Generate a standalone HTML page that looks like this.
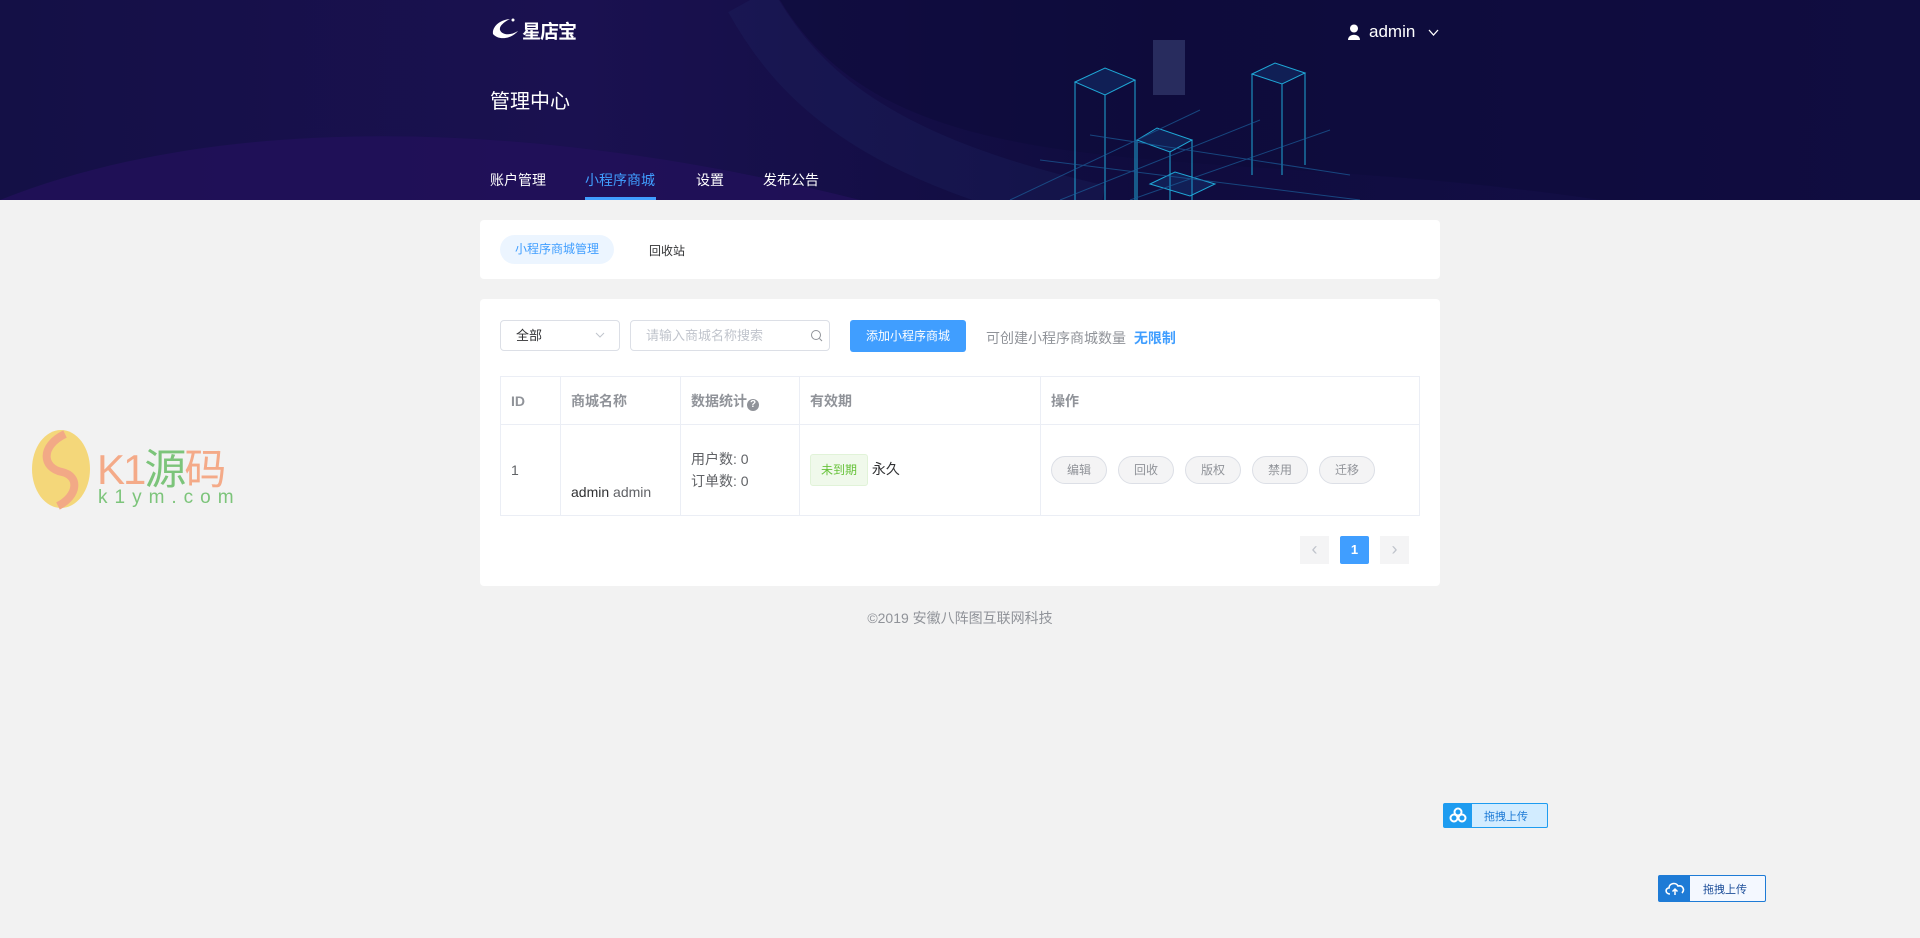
<!DOCTYPE html>
<html><head><meta charset="utf-8"><style>
*{margin:0;padding:0;box-sizing:border-box}
body{width:1920px;height:938px;background:#f2f2f2;font-family:"Liberation Sans","Noto Sans CJK SC",sans-serif;position:relative;overflow:hidden;color:#606266}
.hd{position:absolute;left:0;top:0;width:1920px;height:200px;background:linear-gradient(90deg,#141046 0%,#1a1150 30%,#0f0c3e 60%,#150f4a 100%);overflow:hidden}
.abs{position:absolute}
.card{position:absolute;background:#fff;border-radius:4px;left:480px;width:960px}
table{border-collapse:collapse;position:absolute;left:500px;top:376px;width:920px;font-size:14px}
td,th{border:1px solid #ebeef5;text-align:left;padding:0 10px;font-weight:bold;color:#909399}
td{font-weight:normal;color:#606266}
.ob{display:inline-block;width:56px;height:28px;border:1px solid #dcdfe6;border-radius:14px;background:#f4f4f5;color:#909399;font-size:12px;line-height:26px;text-align:center;margin-right:11px}
</style></head><body>
<div class="hd">
<svg class="abs" style="left:0;top:0" width="1920" height="200">
<path d="M0 200 C200 120 500 110 860 200 Z" fill="#22105a" opacity=".8"/>
<path d="M780 0 C900 200 1200 140 1600 200 L1920 200 L1920 0 Z" fill="#0e0b3a" opacity=".6"/>
<path d="M750 0 C800 90 880 160 1100 210" stroke="#1e2a66" stroke-width="50" fill="none" opacity=".25"/>
<g stroke="#1fa7d6" stroke-width="1" fill="rgba(30,120,200,.18)">
<path d="M1075 82 L1105 68 L1135 80 L1105 95 Z M1075 82 L1075 200 M1105 95 L1105 200 M1135 80 L1135 200"/>
<path d="M1252 74 L1275 63 L1305 73 L1282 84 Z M1252 74 L1252 175 M1282 84 L1282 175 M1305 73 L1305 165"/>
<path d="M1137 140 L1157 128 L1192 140 L1170 152 Z M1137 140 L1137 200 M1170 152 L1170 200 M1192 140 L1192 200"/>
<path d="M1150 184 L1175 172 L1215 184 L1190 196 Z"/>
</g>
<path d="M1153 40 L1185 40 L1185 95 L1153 95 Z" fill="#3a4377" opacity=".6"/>
<g stroke="#1b5e9a" stroke-width="1" opacity=".7" fill="none">
<path d="M1010 200 L1200 110 M1060 200 L1260 120 M1130 200 L1330 130 M1040 160 L1360 200 M1090 135 L1350 175"/>
</g>
</svg>
<svg class="abs" style="left:490px;top:16px" width="30" height="26"><path d="M20 3 C8 4 2 12 3 18 C8 24 20 24 28 15 C20 20 12 19 10 14 C9 10 14 6 20 3Z" fill="#fff"/><circle cx="23" cy="4" r="1.5" fill="#fff"/></svg>
<div class="abs" style="left:522px;top:17px;color:#fff;font-size:19px;font-weight:bold;letter-spacing:-1px">星店宝</div>
<div class="abs" style="left:490px;top:85px;color:#fff;font-size:20px">管理中心</div>
<div class="abs" style="left:490px;top:170px;color:#fff;font-size:14px">账户管理</div>
<div class="abs" style="left:585px;top:170px;color:#409eff;font-size:14px">小程序商城</div>
<div class="abs" style="left:585px;top:197px;width:71px;height:3px;background:#409eff"></div>
<div class="abs" style="left:696px;top:170px;color:#fff;font-size:14px">设置</div>
<div class="abs" style="left:763px;top:170px;color:#fff;font-size:14px">发布公告</div>
<svg class="abs" style="left:1348px;top:24px" width="12" height="16"><circle cx="6" cy="4.5" r="4" fill="#fff"/><path d="M0 16 C0 9 12 9 12 16Z" fill="#fff"/></svg>
<div class="abs" style="left:1369px;top:22px;color:#fff;font-size:17px">admin</div>
<svg class="abs" style="left:1428px;top:29px" width="11" height="8"><path d="M1 1 L5.5 6 L10 1" stroke="#fff" fill="none" stroke-width="1.3"/></svg>
</div>

<div class="card" style="top:220px;height:59px"></div>
<div class="abs" style="left:500px;top:235px;width:114px;height:29px;border-radius:15px;background:#ecf5ff;color:#409eff;font-size:12px;line-height:29px;text-align:center">小程序商城管理</div>
<div class="abs" style="left:649px;top:242px;font-size:12px;color:#303133">回收站</div>

<div class="card" style="top:299px;height:287px"></div>
<div class="abs" style="left:500px;top:320px;width:120px;height:31px;border:1px solid #dcdfe6;border-radius:4px;font-size:13px;color:#303133;padding:0 15px;line-height:29px">全部</div>
<svg class="abs" style="left:595px;top:332px" width="10" height="7"><path d="M1 1 L5 5 L9 1" stroke="#c0c4cc" fill="none"/></svg>
<div class="abs" style="left:630px;top:320px;width:200px;height:31px;border:1px solid #dcdfe6;border-radius:4px;font-size:13px;color:#c0c4cc;padding:0 15px;line-height:29px">请输入商城名称搜索</div>
<svg class="abs" style="left:810px;top:329px" width="13" height="14"><circle cx="6" cy="6" r="4.5" stroke="#909399" fill="none"/><path d="M9.5 9.5 L12 12" stroke="#909399"/></svg>
<div class="abs" style="left:850px;top:320px;width:116px;height:32px;background:#409eff;border-radius:3px;color:#fff;font-size:12px;line-height:32px;text-align:center">添加小程序商城</div>
<div class="abs" style="left:986px;top:328px;font-size:14px;color:#909399">可创建小程序商城数量 <span style="color:#409eff;font-weight:bold;margin-left:4px">无限制</span></div>

<table>
<tr style="height:48px"><th style="width:60px">ID</th><th style="width:120px">商城名称</th><th style="width:119px">数据统计<span style="display:inline-block;width:12px;height:12px;border-radius:50%;background:#909399;color:#fff;font-size:10px;line-height:12px;text-align:center;vertical-align:-1px">?</span></th><th style="width:241px">有效期</th><th>操作</th></tr>
<tr style="height:91px"><td>1</td><td style="vertical-align:bottom;padding-bottom:15px;color:#303133">admin <span style="color:#606266">admin</span></td><td style="line-height:22px">用户数: 0<br>订单数: 0</td><td><span style="display:inline-block;height:32px;padding:0 10px;border:1px solid #e1f3d8;background:#f0f9eb;color:#67c23a;font-size:12px;line-height:30px;border-radius:3px">未到期</span> <span style="color:#303133">永久</span></td><td><span class="ob">编辑</span><span class="ob">回收</span><span class="ob">版权</span><span class="ob">禁用</span><span class="ob">迁移</span></td></tr>
</table>

<div class="abs" style="left:1300px;top:536px;width:29px;height:28px;background:#f4f4f5;color:#c0c4cc;text-align:center;line-height:26px;font-size:18px">‹</div>
<div class="abs" style="left:1340px;top:536px;width:29px;height:28px;background:#409eff;color:#fff;text-align:center;line-height:28px;font-size:13px;font-weight:bold;border-radius:2px">1</div>
<div class="abs" style="left:1380px;top:536px;width:29px;height:28px;background:#f4f4f5;color:#c0c4cc;text-align:center;line-height:26px;font-size:18px">›</div>

<div class="abs" style="left:0;width:1920px;top:608px;text-align:center;font-size:14px;color:#909399">©2019 安徽八阵图互联网科技</div>

<svg class="abs" style="left:30px;top:428px" width="62" height="82"><ellipse cx="31" cy="41" rx="29" ry="39" fill="#f4d77a"/><path d="M35 6 C10 18 12 40 32 44 C50 48 48 68 28 78" stroke="#f2a986" stroke-width="8" fill="none"/></svg>
<div class="abs" style="left:97px;top:436px;font-size:42px;color:#f4aa88;letter-spacing:-2px">K1<span style="color:#7cc47a">源</span>码</div>
<div class="abs" style="left:98px;top:487px;font-size:19px;color:#7cc47a;letter-spacing:7px">k1ym.com</div>

<div class="abs" style="left:1443px;top:803px;width:105px;height:25px;border:1px solid #1e9cf0;border-radius:2px;background:#d2ecff"><div style="width:28px;height:23px;background:#1e9cf0;position:relative"><svg class="abs" style="left:5px;top:3px" width="18" height="16"><circle cx="9" cy="5" r="3.5" stroke="#fff" stroke-width="2" fill="none"/><circle cx="5" cy="11" r="3.5" stroke="#fff" stroke-width="2" fill="none"/><circle cx="13" cy="11" r="3.5" stroke="#fff" stroke-width="2" fill="none"/></svg></div><span class="abs" style="left:40px;top:4px;font-size:11px;color:#1e7bd6">拖拽上传</span></div>
<div class="abs" style="left:1658px;top:875px;width:108px;height:27px;border:1px solid #1e7bd6;border-radius:2px;background:#f4f8ff"><div style="width:31px;height:25px;background:#1e7bd6;position:relative"><svg class="abs" style="left:5px;top:5px" width="22" height="15"><path d="M6 13 C1 13 1 7 5 7 C5 2 12 1 14 5 C19 4 21 9 18 12" stroke="#fff" stroke-width="1.6" fill="none"/><path d="M11 14 L11 8 M8.5 10.5 L11 8 L13.5 10.5" stroke="#fff" stroke-width="1.5" fill="none"/></svg></div><span class="abs" style="left:44px;top:5px;font-size:11px;color:#1e4f9a">拖拽上传</span></div>
</body></html>
